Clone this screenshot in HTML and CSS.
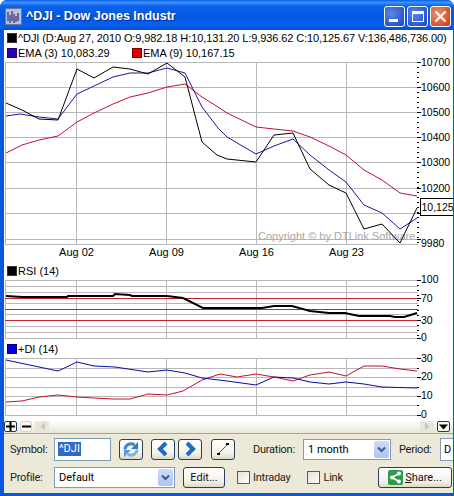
FILE: index.html
```html
<!DOCTYPE html>
<html>
<head>
<meta charset="utf-8">
<title>^DJI - Dow Jones Industr</title>
<link rel="stylesheet" href="styles.css">
</head>
<body>
<div class="window">
  <header class="titlebar">
    <svg class="appicon" width="17" height="17" viewBox="0 0 17 17">
      <rect x="0.5" y="0.5" width="16" height="16" fill="#b9bfdc" stroke="#6f7396"/>
      <path d="M3 4v9M5 7v8M7 3v10M9 6v9M11 8v6M13 5v8" stroke="#30307c" stroke-width="1.2" fill="none"/>
    </svg>
    <span class="title">^DJI - Dow Jones Industr</span>
    <div class="winbtns">
      <div class="winbtn"><span class="glyph-min"></span></div>
      <div class="winbtn"><span class="glyph-max"></span></div>
      <div class="winbtn close">
        <svg width="13" height="13" viewBox="0 0 13 13"><path d="M1.5 1.5l10 10M11.5 1.5l-10 10" stroke="#fff" stroke-width="2.2" fill="none"/></svg>
      </div>
    </div>
  </header>

  <main class="client">
    <div class="legend first">
      <span class="swatch black"></span><span class="ltext">^DJI (D:Aug 27, 2010 O:9,982.18 H:10,131.20 L:9,936.62 C:10,125.67 V:136,486,736.00)</span>
    </div>
    <div class="legend second">
      <span class="swatch indigo"></span><span class="ltext ema3">EMA (3) 10,083.29</span>
      <span class="swatch red"></span><span class="ltext">EMA (9) 10,167.15</span>
    </div>

    <svg class="pane price" viewBox="4 58 449 204" width="449" height="204">
      <g class="grid">
        <path d="M5 62H418M5 87H418M5 112H418M5 137H418M5 162H418M5 188H418M5 213H418M5 239H418M5 244H418"/>
        <path d="M5.5 62V244M76.5 62V244M166.5 62V244M256.5 62V244M346.5 62V244"/>
      </g>
      <text class="watermark" x="258" y="240">Copyright © by DTLink Software</text>
      <polyline class="ln red-ln" points="6,153 22,145 39,140 58,136 77,122 94,113 113,104 130,97 148,93 167,87 185,84 202,97 218,107 227,113 256,127 274,129 293,131 310,137 329,146 346,155 364,170 382,180 400,193 417,196"/>
      <polyline class="ln indigo-ln" points="6,116 20,114 39,117 58,119 77,94 94,86 113,77 130,73 148,73 167,68 185,73 202,107 218,128 227,137 256,154 274,146 293,139 310,155 329,170 346,182 364,205 382,213 400,229 417,218"/>
      <polyline class="ln black-ln" points="6,103 22,110 39,119 58,120 77,69 94,78 113,67 130,69 148,74 167,63 185,77 202,142 217,155 227,159 256,162 274,135 293,133 310,169 329,185 346,193 364,229 382,224 400,243 417,208"/>
      <line class="tick-minor" x1="418" x2="418" y1="62" y2="244"/>
      <path class="tick-major" d="M417 62H421M417 87H421M417 112H421M417 137H421M417 162H421M417 188H421M417 213H421M417 239H421"/>
      <g class="axis">
        <text x="421" y="66">10700</text>
        <text x="421" y="91">10600</text>
        <text x="421" y="116">10500</text>
        <text x="421" y="141">10400</text>
        <text x="421" y="166">10300</text>
        <text x="421" y="192">10200</text>
        <text x="421" y="247">9980</text>
      </g>
      <rect class="valuebox" x="420.5" y="198.5" width="36" height="17"/>
      <text class="axis-text" x="421.500" y="211">10,125</text>
      <g class="dates">
        <text x="76.5" y="256">Aug 02</text>
        <text x="166.5" y="256">Aug 09</text>
        <text x="256.5" y="256">Aug 16</text>
        <text x="346.5" y="256">Aug 23</text>
      </g>
    </svg>

    <div class="legend third">
      <span class="swatch black"></span><span class="ltext">RSI (14)</span>
    </div>

    <svg class="pane rsi" viewBox="4 278 449 64" width="449" height="64">
      <g class="grid">
        <path d="M5 280H418M5 286H418M5 292H418M5 303H418M5 314H418M5 326H418M5 332H418M5 338H418"/>
        <path d="M5.5 280V338M76.5 280V338M166.5 280V338M256.5 280V338M346.5 280V338"/>
      </g>
      <path class="level" d="M5 298H418M5 309H418M5 320H418"/>
      <polyline class="ln rsi-ln" points="6,296 22,297 67,297 68,296 113,296 115,294 130,295 132,296 167,296 183,298 203,308 220,308 262,308 274,306 292,306 310,311 329,313 345,313 359,316 390,316 395,317 404,317 417,313"/>
      <line class="tick-minor" x1="418" x2="418" y1="280" y2="338"/>
      <path class="tick-major" d="M417 280H421M417 298H421M417 320H421M417 338H421"/>
      <g class="axis">
        <text x="421" y="283">100</text>
        <text x="421" y="302">70</text>
        <text x="421" y="324">30</text>
        <text x="421" y="341">0</text>
      </g>
    </svg>

    <div class="legend fourth">
      <span class="swatch blue"></span><span class="ltext">+DI (14)</span>
    </div>

    <svg class="pane di" viewBox="4 356 449 64" width="449" height="64">
      <g class="grid">
        <path d="M5 358H418M5 368H418M5 377H418M5 387H418M5 396H418M5 405H418M5 415H418"/>
        <path d="M5.5 358V415M76.5 358V415M166.5 358V415M256.5 358V415M346.5 358V415"/>
      </g>
      <polyline class="ln red-ln" points="6,402 22,401 39,397 58,395 77,397 94,398 113,399 130,399 148,394 167,395 183,391 202,380 220,374 237,377 256,374 274,377 293,381 310,375 329,372 346,376 364,366 382,366 400,369 417,371"/>
      <polyline class="ln blue-ln" points="6,360 58,371 77,362 94,366 115,367 148,372 167,370 185,373 202,378 227,381 256,385 274,377 293,378 310,382 329,384 346,382 364,384 382,387 417,388"/>
      <path class="tick-major" d="M417 358H421M417 368H419M417 377H421M417 387H419M417 396H421M417 405H419M417 415H421"/>
      <g class="axis">
        <text x="421" y="362">30</text>
        <text x="421" y="380">20</text>
        <text x="421" y="399">10</text>
        <text x="421" y="418">0</text>
      </g>
    </svg>

    <div class="scrollrow">
      <div class="sbtn focus"><svg width="9" height="9" viewBox="0 0 9 9"><path d="M4.5 0v9M0 4.5h9" stroke="#000" stroke-width="2"/></svg></div>
      <div class="sbtn"><svg width="9" height="9" viewBox="0 0 9 9"><path d="M0 4.5h9" stroke="#000" stroke-width="2"/></svg></div>
      <div class="sbtn off"><svg width="7" height="9" viewBox="0 0 7 9"><path d="M6 0.5L1.500 4.500L6 8.500z" fill="#c9c7bc"/></svg></div>
      <div class="spacer"></div>
      <div class="sbtn off"><svg width="7" height="9" viewBox="0 0 7 9"><path d="M1 0.500L5.500 4.500L1 8.500z" fill="#c9c7bc"/></svg></div>
      <div class="sbtn focus"><svg width="9" height="6" viewBox="0 0 9 6"><path d="M0 0.500H9L4.500 5.500z" fill="#000"/></svg></div>
    </div>

    <div class="toolbar">
      <div class="row">
        <span class="label w-label">Symbol:</span>
        <div class="field symbol"><span class="selected">^DJI</span></div>
        <button class="btn icon refresh" type="button">
          <svg width="18" height="17" viewBox="0 0 18 17">
            <path d="M3 8.500A6 6 0 0 1 12.500 4" fill="none" stroke="#3f86d0" stroke-width="3"/>
            <path d="M16 1v7h-7z" fill="#2f78c8"/>
            <path d="M15 8.500A6 6 0 0 1 5.500 13" fill="none" stroke="#7db4e6" stroke-width="3"/>
            <path d="M2 16V9h7z" fill="#5a9cdc"/>
          </svg>
        </button>
        <button class="btn icon prev" type="button">
          <svg width="14" height="16" viewBox="0 0 14 16"><path d="M10 2L4 8l6 6" fill="none" stroke="#1e6cc4" stroke-width="4"/></svg>
        </button>
        <button class="btn icon next" type="button">
          <svg width="14" height="16" viewBox="0 0 14 16"><path d="M4 2l6 6-6 6" fill="none" stroke="#1e6cc4" stroke-width="4"/></svg>
        </button>
        <button class="btn icon draw" type="button">
          <svg width="14" height="14" viewBox="0 0 14 14"><path d="M2.500 11.500l9-9" stroke="#555" stroke-width="1"/><path d="M1 11h3v2H1zM10 1h3v2h-3z" fill="#000"/></svg>
        </button>
        <span class="label duration">Duration:</span>
        <div class="combo month"><span class="combo-text">1 month</span><span class="combo-arrow"><svg width="9" height="7" viewBox="0 0 9 7"><path d="M1 1.500l3.500 3.500L8 1.500" fill="none" stroke="#3c5a8c" stroke-width="2"/></svg></span></div>
        <span class="label period">Period:</span>
        <div class="field periodbox"><span>D</span></div>
      </div>
      <div class="row">
        <span class="label w-label">Profile:</span>
        <div class="combo profile"><span class="combo-text">Default</span><span class="combo-arrow"><svg width="9" height="7" viewBox="0 0 9 7"><path d="M1 1.500l3.500 3.500L8 1.500" fill="none" stroke="#3c5a8c" stroke-width="2"/></svg></span></div>
        <button class="btn edit" type="button">Edit...</button>
        <span class="check intraday"></span><span class="label chk-label">Intraday</span>
        <span class="check link"></span><span class="label chk-label">Link</span>
        <button class="btn share" type="button">
          <svg width="15" height="15" viewBox="0 0 15 15"><rect width="15" height="15" rx="2" fill="#2f9a4a"/><path d="M11 3.500L4 7.500l7 4" fill="none" stroke="#fff" stroke-width="1.600"/><circle cx="11" cy="3.500" r="2" fill="#fff"/><circle cx="4" cy="7.500" r="2" fill="#fff"/><circle cx="11" cy="11.500" r="2" fill="#fff"/></svg>
          <span><u>S</u>hare...</span>
        </button>
      </div>
    </div>
  </main>
</div>
</body>
</html>
```
FILE: styles.css
```css
* { box-sizing: border-box; }
html, body { margin: 0; padding: 0; background: #fff; }
body { width: 454px; height: 496px; overflow: hidden; font-family: "Liberation Sans", Arial, sans-serif; }

.window { width: 454px; height: 496px; display: flex; flex-direction: column; background: #0a56e0; border-radius: 7px 7px 0 0; overflow: hidden; }

.titlebar { height: 30px; flex: none; display: flex; align-items: center; padding: 2px 3px 0 5px;
  background: linear-gradient(180deg, #0a5ae6 0%, #3a93ff 8%, #0c61ea 20%, #0558e4 55%, #0660ee 85%, #0350d0 100%); }
.appicon { flex: none; }
.title { margin-left: 4px; color: #fff; font: bold 12.500px "Liberation Sans", Arial, sans-serif; text-shadow: 1px 1px 1px #0a2f90; }
.winbtns { margin-left: auto; display: flex; gap: 2px; }
.winbtn { width: 21px; height: 21px; border: 1px solid #fff; border-radius: 3px; background: radial-gradient(circle at 35% 35%, #5a86e8, #2a55cc 75%, #2046b4); display: flex; align-items: center; justify-content: center; }
.winbtn.close { background: radial-gradient(circle at 35% 35%, #ea9070, #d8532f 70%, #bb3a1c); }
.glyph-min { width: 9px; height: 3px; background: #fff; margin-top: 9px; margin-right: 3px; }
.glyph-max { width: 12px; height: 11px; border: 1px solid #fff; border-top-width: 3px; }

.client { flex: 1; margin: 0 1px 3px 4px; background: #fff; display: flex; flex-direction: column; min-height: 0; overflow: hidden; }

.legend { display: flex; align-items: center; padding-left: 3px; font-size: 11px; color: #000; white-space: nowrap; }
.legend.first { height: 14px; padding-top: 1px; letter-spacing: -0.095px; }
.legend.second { height: 14px; padding-top: 4px; }
.legend.third { height: 16px; padding-top: 1px; }
.legend.fourth { height: 14px; }
.swatch { width: 10px; height: 10px; border: 1px solid #333; flex: none; }
.swatch.black { background: #000; }
.swatch.indigo { background: #2a00b0; border-color: #1a0070; }
.swatch.red { background: #e60000; border-color: #700; }
.swatch.blue { background: #0000e0; border-color: #000070; }
.ltext { margin-left: 1px; }
.ema3 { width: 114px; }

.pane { display: block; flex: none; overflow: visible; }
.grid path { fill: none; stroke: #b8b8b8; stroke-width: 1; shape-rendering: crispEdges; transform: translateY(0.5px); }
.ln { fill: none; stroke-width: 1; }
.red-ln { stroke: #c4102c; }
.indigo-ln { stroke: #2c10a0; }
.black-ln { stroke: #000; }
.blue-ln { stroke: #0a0aa8; }
.rsi-ln { stroke: #000; stroke-width: 2; }
.level { fill: none; stroke: #c8202c; stroke-width: 1; shape-rendering: crispEdges; }
.tick-minor { stroke: #000; stroke-width: 2; stroke-dasharray: 1 4; }
.tick-major { fill: none; stroke: #000; stroke-width: 1; shape-rendering: crispEdges; transform: translateY(0.5px); }
.axis text, .axis-text { font: 10.500px "Liberation Sans", Arial, sans-serif; fill: #000; }
.dates text { font: 11px "Liberation Sans", Arial, sans-serif; fill: #000; text-anchor: middle; }
.watermark { font: 11px "Liberation Sans", Arial, sans-serif; fill: #a8a8a8; }
.valuebox { fill: #fff; stroke: #000; stroke-width: 1; }

.scrollrow { height: 13px; flex: none; display: flex; align-items: center; padding: 0 3px 0 0; gap: 3px; background: linear-gradient(180deg, #fff 0%, #f5f4ec 50%, #e8e6d8 100%); }
.spacer { flex: 1; }
.sbtn { width: 12px; height: 11px; border: 1px solid #d8d6c8; border-radius: 2px; background: #f8f7f0; display: flex; align-items: center; justify-content: center; }
.sbtn.focus { border-color: #1c3a5e; width: 13px; }
.sbtn.off { width: 14px; background: #e8e6da; border-color: #e8e6da; }

.toolbar { height: 60px; flex: none; background: #ece9d8; border-top: 1px solid #a8a498; display: flex; flex-direction: column; padding: 1px 0 0 6px; overflow: hidden; }
.row { height: 28px; flex: none; display: flex; align-items: center; font: 11px Roboto, "Liberation Sans", sans-serif; color: #000; white-space: nowrap; }
.label { flex: none; font-size: 11px; letter-spacing: -0.25px; color: #222; }
.w-label { width: 44px; }
.field { flex: none; height: 23px; background: #fff; border: 1px solid #7f9db9; display: flex; align-items: center; padding-left: 3px; font-size: 11px; }
.symbol { width: 57px; }
.selected { background: #316ac5; color: #fff; padding: 0 1px; line-height: 14px; }
.btn { flex: none; height: 21px; padding: 0; border: 1px solid #28405c; border-radius: 3px; background: linear-gradient(180deg, #fff 0%, #f4f2e8 70%, #dcd8c8 100%); display: flex; align-items: center; justify-content: center; font: 11px Roboto, "Liberation Sans", sans-serif; color: #111; }
.icon { width: 24px; }
.refresh { margin-left: 8px; }
.prev { margin-left: 8px; }
.next { margin-left: 3px; }
.draw { margin-left: 9px; }
.duration { margin-left: 18px; width: 50px; }
.combo { flex: none; height: 21px; background: #fff; border: 1px solid #7f9db9; display: flex; align-items: center; justify-content: space-between; padding: 0 1px 0 4px; font-size: 11px; }
.month { width: 88px; }
.profile { width: 121px; }
.combo-arrow { width: 15px; height: 17px; border-radius: 2px; background: linear-gradient(180deg, #cfdcf8, #aec4ee); display: flex; align-items: center; justify-content: center; }
.period { margin-left: 8px; width: 41px; }
.periodbox { width: 30px; }
.edit { width: 42px; margin-left: 8px; }
.check { flex: none; width: 13px; height: 13px; border: 1px solid #44607c; background: linear-gradient(135deg, #e4e2d8, #fff); }
.intraday { margin-left: 12px; }
.link { margin-left: 17px; }
.chk-label { margin-left: 3px; }
.share { width: 74px; margin-left: auto; margin-right: 1px; gap: 2px; }
```
